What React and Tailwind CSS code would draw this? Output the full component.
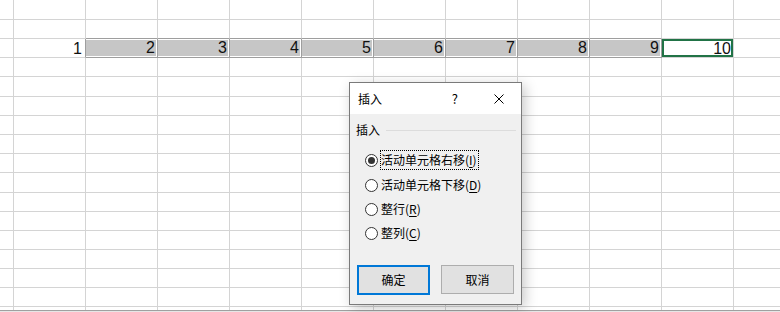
import React from "react";

// sheet geometry, in px (border included)
const COLS = [14, 72, 72, 72, 72, 72, 72, 72, 72, 72, 72, 46];
const ROWS = [20, 19, 19, 19, 20, 19, 19, 19, 19, 20, 19, 19, 19, 19, 19, 19, 3];

const W = { 14: "w-[14px]", 72: "w-[72px]", 46: "w-[46px]" };
const H = { 20: "h-[20px]", 19: "h-[19px]", 3: "h-[3px]" };

const DATA_ROW = 2;

const cellBorder = (r, c) => {
  const last = c === COLS.length - 1;
  const bottomRow = r === ROWS.length - 1;
  const sel = c >= 2 && c <= 9;
  let cls = "border-[#d4d4d4]";
  if (!last) cls += " border-r";
  if (!bottomRow) cls += " border-b";
  if (r === DATA_ROW - 1 && sel) cls += " border-b-[#9e9e9e]";
  if (r === DATA_ROW && sel) cls += " border-b-[#9e9e9e] border-r-[#9e9e9e]";
  if (r === DATA_ROW && c === 1) cls += " border-r-[#9e9e9e]";
  return cls;
};

const CellBody = ({ c }) => {
  if (c === 1) {
    return (
      <div className="h-full flex items-end justify-end pr-[3px] text-[16px] leading-none text-[#111]">
        1
      </div>
    );
  }
  if (c >= 2 && c <= 9) {
    return (
      <div className="h-full bg-white py-px pr-px">
        <div className="h-full bg-[#c6c6c6] flex items-end justify-end pr-px text-[16px] leading-none text-[#111]">
          {c}
        </div>
      </div>
    );
  }
  if (c === 10) {
    return (
      <div className="h-full border-2 border-[#217346] flex items-end justify-end text-[16px] leading-none text-[#111]">
        <span className="-mb-[2px]">10</span>
      </div>
    );
  }
  return null;
};

const Sheet = () => (
  <div className="flex flex-col">
    {ROWS.map((h, r) => (
      <div key={r} className={`flex ${H[h]}`}>
        {COLS.map((w, c) => (
          <div key={c} className={`shrink-0 ${W[w]} ${cellBorder(r, c)}`}>
            {r === DATA_ROW && <CellBody c={c} />}
          </div>
        ))}
      </div>
    ))}
    <div className="h-px bg-[#a0a0a0]" />
    <div className="h-px bg-[#e6e6e6]" />
  </div>
);

const Radio = ({ checked, focused, text, hot }) => (
  <div className="flex items-center h-[20px]">
    <span className="ml-[15px] w-[13px] h-[13px] rounded-full border border-[#333333] bg-white flex items-center justify-center">
      {checked && <span className="w-[7px] h-[7px] rounded-full bg-[#333333]" />}
    </span>
    <span
      className={`ml-[2px] h-[20px] flex items-center pr-px border border-dotted ${
        focused ? "border-black" : "border-transparent"
      }`}
    >
      {text}(<span className="underline underline-offset-2">{hot}</span>)
    </span>
  </div>
);

const InsertDialog = () => (
  <div className="absolute left-[349px] top-[82px] w-[173px] h-[223px] border border-[#7a7a7a] bg-[#f0f0f0] shadow-[3px_3px_12px_rgba(0,0,0,0.22)] flex flex-col text-[12px] text-black font-['Noto_Sans_CJK_SC',sans-serif]">
    {/* title bar */}
    <div className="h-[31px] shrink-0 bg-white flex items-center pl-[8px] pr-[17px]">
      <span>插入</span>
      <span className="flex-1" />
      <span className="mr-[36px] text-[13px]">?</span>
      <svg width="10" height="10" viewBox="0 0 10 10" className="block">
        <path d="M0.5 0.5 L9.5 9.5 M9.5 0.5 L0.5 9.5" stroke="#000" strokeWidth="1" />
      </svg>
    </div>

    {/* group header */}
    <div className="mt-[8px] h-[16px] flex items-center pl-[6px] pr-[5px]">
      <span>插入</span>
      <span className="flex-1 ml-[6px] h-px bg-[#dcdcdc]" />
    </div>

    <div className="mt-[12px] flex flex-col">
      <Radio checked focused text="活动单元格右移" hot="I" />
      <div className="h-[5px]" />
      <Radio text="活动单元格下移" hot="D" />
      <div className="h-[4px]" />
      <Radio text="整行" hot="R" />
      <div className="h-[4px]" />
      <Radio text="整列" hot="C" />
    </div>

    <div className="mt-[22px] flex justify-between pl-[7px] pr-[7px]">
      <button className="w-[73px] h-[30px] border-2 border-[#0078d7] bg-[#e1e1e1] flex items-center justify-center">
        确定
      </button>
      <button className="w-[73px] h-[29px] border border-[#adadad] bg-[#e1e1e1] flex items-center justify-center">
        取消
      </button>
    </div>
  </div>
);

export default function App() {
  return (
    <div className="relative w-[780px] h-[312px] overflow-hidden bg-white text-black font-['Liberation_Sans',sans-serif]">
      <Sheet />
      <InsertDialog />
    </div>
  );
}
